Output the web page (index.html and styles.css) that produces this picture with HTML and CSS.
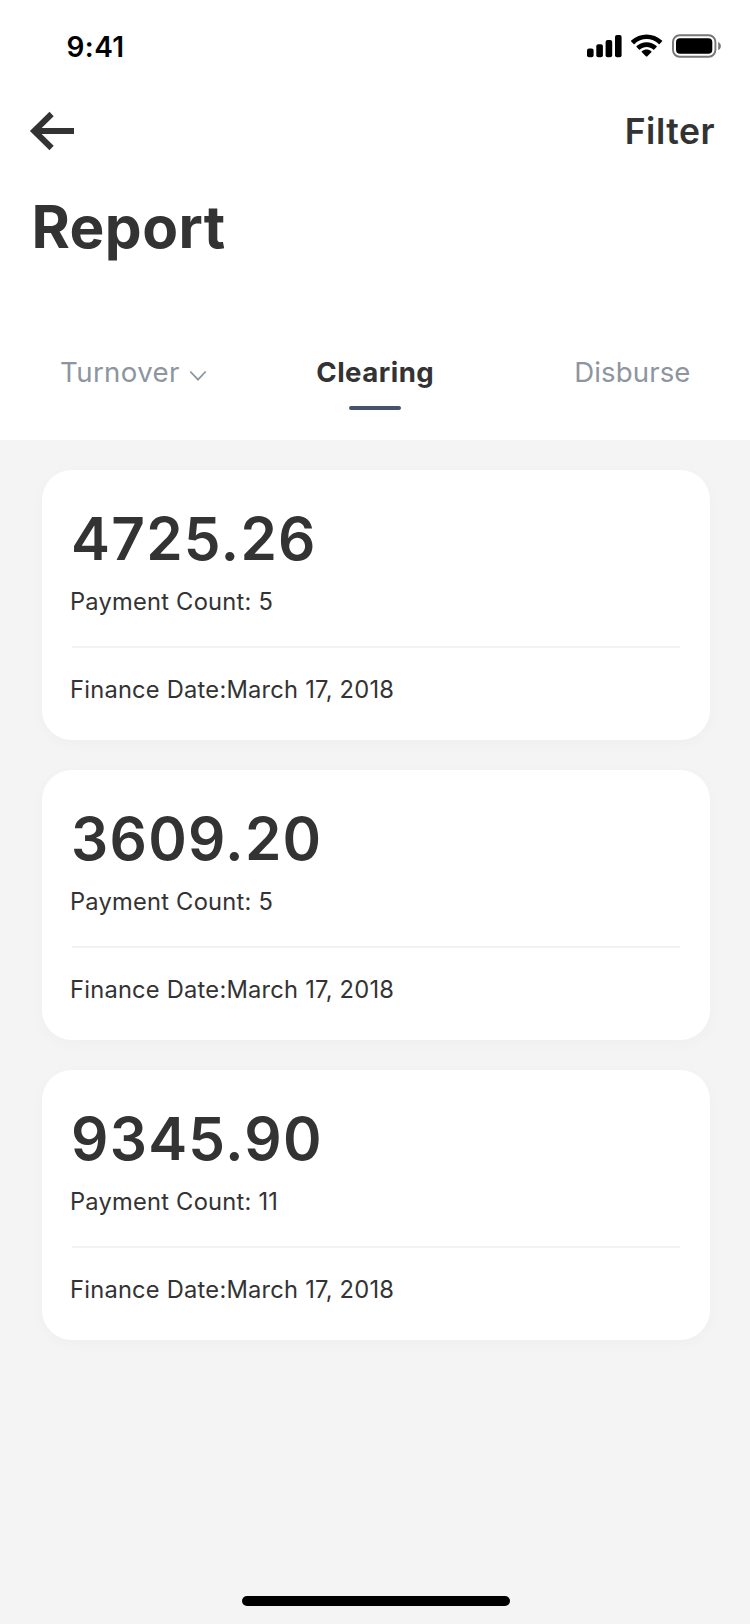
FILE: index.html
```html
<!DOCTYPE html>
<html lang="en">
<head>
<meta charset="utf-8">
<title>Report</title>
<link rel="stylesheet" href="styles.css">
</head>
<body>
<div class="screen">
  <header class="header">
    <div class="status">
      <span class="time">9:41</span>
      <svg class="status-icons" width="136" height="26" viewBox="0 0 136 26">
        <rect x="0" y="14.5" width="6.6" height="8.7" rx="2"/>
        <rect x="9.3" y="10.2" width="6.6" height="13" rx="2"/>
        <rect x="18.6" y="6" width="6.6" height="17.2" rx="2"/>
        <rect x="28" y="1" width="6.6" height="22.2" rx="2"/>
        <path d="M59.6 5.1c4.5 0 8.800 1.700 12.100 4.900.25.24.65.24.9 0l2.400-2.400a.68.68 0 0 0 0-.98c-8.600-8.200-22.200-8.200-30.800 0a.68.68 0 0 0 0 .98l2.400 2.400c.25.24.65.24.9 0 3.300-3.200 7.600-4.900 12.100-4.900z"/>
        <path d="M59.6 12.9c2.500 0 4.900.93 6.700 2.600.25.24.65.24.9 0l2.400-2.400a.69.69 0 0 0 0-1c-5.600-5.300-14.400-5.300-20 0a.69.69 0 0 0 0 1l2.400 2.400c.25.24.65.24.9 0 1.800-1.670 4.200-2.600 6.700-2.600z"/>
        <path d="M64.3 18.200a.66.66 0 0 0 0-1c-2.700-2.300-6.700-2.300-9.400 0a.66.66 0 0 0 0 1l4.200 4.200c.27.27.73.27 1 0z"/>
        <rect class="battery-shell" x="86" y="1.3" width="42.4" height="21.4" rx="6.6"/>
        <rect x="89" y="4.3" width="36.3" height="15.4" rx="4"/>
        <path class="battery-cap" d="M131.2 7.9v8.2c1.700-.7 2.700-2.300 2.700-4.100s-1-3.400-2.700-4.100z"/>
      </svg>
    </div>
    <nav class="nav">
      <svg class="back" width="46" height="40" viewBox="0 0 46 40">
        <path d="M45 20H6M22.600 3L5.200 20 22.600 37"/>
      </svg>
      <span class="filter">Filter</span>
    </nav>
    <h1 class="title">Report</h1>
    <div class="tabs">
      <div class="tab tab-first">Turnover
        <svg class="chevron" width="18" height="12" viewBox="0 0 18 12"><path d="M1.300 1.500L9 9.700l7.700-8.200"/></svg>
      </div>
      <div class="tab tab-active">Clearing</div>
      <div class="tab tab-last">Disburse</div>
    </div>
  </header>
  <main class="list">
    <section class="card">
      <div class="amount">4725.26</div>
      <div class="line">Payment Count: 5</div>
      <div class="divider"></div>
      <div class="line">Finance Date:March 17, 2018</div>
    </section>
    <section class="card">
      <div class="amount">3609.20</div>
      <div class="line">Payment Count: 5</div>
      <div class="divider"></div>
      <div class="line">Finance Date:March 17, 2018</div>
    </section>
    <section class="card">
      <div class="amount">9345.90</div>
      <div class="line">Payment Count: 11</div>
      <div class="divider"></div>
      <div class="line">Finance Date:March 17, 2018</div>
    </section>
  </main>
  <div class="home-bar"></div>
</div>
</body>
</html>
```
FILE: styles.css
```css
* { box-sizing: border-box; }
body {
  margin: 0;
  font-family: Inter, "Liberation Sans", sans-serif;
  color: #333;
  background: #f4f4f4;
}
.screen {
  width: 750px;
  height: 1624px;
  display: flex;
  flex-direction: column;
  background: #f4f4f4;
}
.header { height: 440px; background: #fff; }

.status {
  height: 94px;
  padding: 0 27px 0 66.5px;
  display: flex;
  align-items: center;
  justify-content: space-between;
}
.time {
  font-size: 28px;
  font-weight: 600;
  line-height: 34px;
  letter-spacing: 0.4px;
  color: #000;
}
.status-icons { display: block; }
.battery-shell { fill: none; stroke: #777; stroke-width: 1.9; }
.battery-cap { fill: #777; }

.nav {
  height: 74px;
  padding: 0 35px 0 29px;
  display: flex;
  align-items: center;
  justify-content: space-between;
}
.back { display: block; fill: none; stroke: #333; stroke-width: 6; }
.filter {
  padding-top: 2px;
  font-size: 35.5px;
  font-weight: 600;
  line-height: 42px;
  letter-spacing: 0.5px;
}
.title {
  margin: 23px 0 0;
  padding-left: 31.5px;
  font-size: 58.5px;
  font-weight: 700;
  line-height: 72px;
  letter-spacing: 0.4px;
}

.tabs {
  margin-top: 91px;
  padding: 0 59.5px 0 60px;
  display: grid;
  grid-template-columns: 1fr auto 1fr;
  align-items: start;
}
.tab {
  font-size: 27.6px;
  line-height: 36px;
  color: #8d959f;
}
.tab-first { display: flex; align-items: center; gap: 9px; letter-spacing: 0.4px; }
.chevron { margin-top: 8px; fill: none; stroke: #8d959f; stroke-width: 1.8; }
.tab-active {
  display: flex;
  flex-direction: column;
  align-items: center;
  gap: 16px;
  font-weight: 700;
  color: #333;
  letter-spacing: 0.48px;
}
.tab-active::after {
  content: "";
  width: 52px;
  height: 4px;
  border-radius: 2px;
  background: #47536b;
}
.tab-last { text-align: right; letter-spacing: 0.1px; }

.list {
  flex: 1;
  padding: 30px 40px 0 42px;
  display: flex;
  flex-direction: column;
  gap: 30px;
}
.card {
  height: 270px;
  padding: 34px 30px 0 28px;
  border-radius: 30px;
  background: #fff;
  box-shadow: 0 4px 16px rgba(0, 0, 0, 0.025);
}
.amount {
  padding-left: 1px;
  font-size: 58.5px;
  font-weight: 600;
  line-height: 70px;
  letter-spacing: 1.25px;
  margin-bottom: 12px;
}
.line {
  font-size: 23.7px;
  line-height: 32px;
  letter-spacing: 0.22px;
}
.divider { height: 2px; margin: 28px 0 26px 2px; background: #f2f2f2; }

.home-bar {
  width: 268px;
  height: 10px;
  margin: 0 auto 18px 242px;
  border-radius: 5px;
  background: #000;
}
```
